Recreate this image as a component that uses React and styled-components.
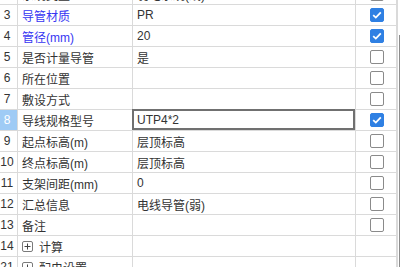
import React from "react";
import styled, { createGlobalStyle } from "styled-components";

const Global = createGlobalStyle`
  html, body { margin: 0; padding: 0; background: #fff; }
  body { width: 400px; height: 267px; overflow: hidden; }
  #root { width: 400px; height: 267px; overflow: hidden; }
`;

const Frame = styled.div`
  display: flex;
  width: 400px;
  height: 267px;
  overflow: hidden;
  font-family: "Liberation Sans", "Noto Sans CJK SC", sans-serif;
  font-size: 12px;
  color: #333;
`;

const Grid = styled.div`
  display: grid;
  grid-template-columns: 18px 115px 223px 41px;
  grid-auto-rows: 21px;
  margin-top: -16px;
  align-content: start;
`;

const Cell = styled.div`
  box-sizing: border-box;
  border-right: 1px solid #dadada;
  border-bottom: 1px solid #dadada;
  display: flex;
  align-items: center;
  white-space: nowrap;
  overflow: hidden;
  position: relative;
`;

const NumCell = styled(Cell)`
  justify-content: center;
  padding-right: 3px;
  background: ${(p) => (p.$active ? "#9fcbf5" : "#fff")};
  color: ${(p) => (p.$active ? "#fff" : "#333")};
`;

const NameCell = styled(Cell)`
  padding-left: 4px;
  color: ${(p) => (p.$blue ? "#3636f2" : "#333")};
`;

const ValueCell = styled(Cell)`
  padding-left: 4px;
  overflow: visible;
  &::after {
    content: "";
    display: ${(p) => (p.$editing ? "block" : "none")};
    position: absolute;
    top: -1px;
    left: -1px;
    right: 0;
    bottom: 0;
    border: 2px solid #707070;
    pointer-events: none;
  }
`;

const CheckCell = styled(Cell)`
  justify-content: center;
  padding-left: 2px;
`;

const Box = styled.span`
  box-sizing: border-box;
  width: 14px;
  height: 14px;
  border-radius: 2px;
  display: flex;
  align-items: center;
  justify-content: center;
  background: ${(p) => (p.$checked ? "#2f80e3" : "#fff")};
  border: 1px solid ${(p) => (p.$checked ? "#2f80e3" : "#8a8a8a")};
`;

const Expander = styled.span`
  box-sizing: border-box;
  width: 11px;
  height: 11px;
  border: 1px solid #7a7a7a;
  border-radius: 2px;
  margin-right: 6px;
  display: flex;
  align-items: center;
  justify-content: center;
`;

const Scrollbar = styled.div`
  width: 3px;
  height: 267px;
  box-sizing: border-box;
  border-left: 1px solid #dadada;
  display: flex;
  justify-content: flex-end;
  padding-top: 35px;
`;

const Thumb = styled.div`
  width: 1px;
  height: 232px;
  background: #8c8c8c;
`;

const rows = [
  { n: 2, name: "系统类型", value: "弱电系统(线)", check: false },
  { n: 3, name: "导管材质", value: "PR", check: true, blue: true },
  { n: 4, name: "管径(mm)", value: "20", check: true, blue: true },
  { n: 5, name: "是否计量导管", value: "是", check: false },
  { n: 6, name: "所在位置", value: "", check: false },
  { n: 7, name: "敷设方式", value: "", check: false },
  { n: 8, name: "导线规格型号", value: "UTP4*2", check: true, editing: true },
  { n: 9, name: "起点标高(m)", value: "层顶标高", check: false },
  { n: 10, name: "终点标高(m)", value: "层顶标高", check: false },
  { n: 11, name: "支架间距(mm)", value: "0", check: false },
  { n: 12, name: "汇总信息", value: "电线导管(弱)", check: false },
  { n: 13, name: "备注", value: "", check: false },
  { n: 14, name: "计算", group: true },
  { n: 21, name: "配电设置", group: true },
];

const Check = () => (
  <svg width="10" height="8" viewBox="0 0 10 8">
    <path d="M1.2 4.2 L3.8 6.6 L8.8 1.4" fill="none" stroke="#fff" strokeWidth="1.8" />
  </svg>
);

const Plus = () => (
  <svg width="7" height="7" viewBox="0 0 7 7">
    <path d="M0.5 3.5 H6.5 M3.5 0.5 V6.5" stroke="#444" strokeWidth="1" />
  </svg>
);

export default function App() {
  return (
    <>
      <Global />
      <Frame>
        <Grid>
          {rows.map((r) => (
            <React.Fragment key={r.n}>
              <NumCell $active={r.editing}>{r.n}</NumCell>
              <NameCell $blue={r.blue}>
                {r.group && (
                  <Expander>
                    <Plus />
                  </Expander>
                )}
                {r.name}
              </NameCell>
              <ValueCell $editing={r.editing}>{r.value}</ValueCell>
              <CheckCell>
                {!r.group && (
                  <Box $checked={r.check}>{r.check && <Check />}</Box>
                )}
              </CheckCell>
            </React.Fragment>
          ))}
        </Grid>
        <Scrollbar>
          <Thumb />
        </Scrollbar>
      </Frame>
    </>
  );
}
